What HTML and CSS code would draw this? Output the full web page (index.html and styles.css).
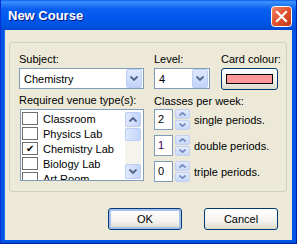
FILE: index.html
```html
<!DOCTYPE html>
<html lang="en">
<head>
  <meta charset="UTF-8">
  <title>New Course</title>
  <link rel="stylesheet" href="styles.css">
</head>
<body>
  <div class="window">
    <div class="titlebar">
      <span class="title">New Course</span>
      <span class="close">
        <svg width="21" height="21" viewBox="0 0 21 21">
          <defs>
            <linearGradient id="cg" x1="0" y1="0" x2="1" y2="1">
              <stop offset="0" stop-color="#f08a6a"/>
              <stop offset="0.5" stop-color="#e0522c"/>
              <stop offset="1" stop-color="#c23a18"/>
            </linearGradient>
          </defs>
          <rect x="0.5" y="0.5" width="20" height="20" rx="3" fill="url(#cg)" stroke="#fff"/>
          <path d="M6 6 L15 15 M15 6 L6 15" stroke="#fff" stroke-width="2.2" stroke-linecap="square"/>
        </svg>
      </span>
    </div>

    <div class="client">
      <div class="group">
        <div class="col-left">
          <div class="label">Subject:</div>
          <div class="combo">
            <span class="combo-text">Chemistry</span>
            <span class="drop"><svg width="8" height="5" viewBox="0 0 8 5"><path d="M0.5 0.5 L4 4 L7.5 0.5" fill="none" stroke="#4d6185" stroke-width="1.8"/></svg></span>
          </div>
          <div class="label gap-top">Required venue type(s):</div>
          <div class="listbox">
            <ul class="items">
              <li><span class="check"></span>Classroom</li>
              <li><span class="check"></span>Physics Lab</li>
              <li><span class="check on">&#10004;</span>Chemistry Lab</li>
              <li><span class="check"></span>Biology Lab</li>
              <li><span class="check"></span>Art Room</li>
            </ul>
            <div class="vscroll">
              <span class="sbtn"><svg width="8" height="5" viewBox="0 0 8 5"><path d="M0.5 4.5 L4 1 L7.5 4.5" fill="none" stroke="#4d6185" stroke-width="1.8"/></svg></span>
              <span class="thumb"></span>
              <span class="track"></span>
              <span class="sbtn"><svg width="8" height="5" viewBox="0 0 8 5"><path d="M0.5 0.5 L4 4 L7.5 0.5" fill="none" stroke="#4d6185" stroke-width="1.8"/></svg></span>
            </div>
          </div>
        </div>

        <div class="col-right">
          <div class="top-row">
            <div class="level">
              <div class="label">Level:</div>
              <div class="combo">
                <span class="combo-text">4</span>
                <span class="drop"><svg width="8" height="5" viewBox="0 0 8 5"><path d="M0.5 0.5 L4 4 L7.5 0.5" fill="none" stroke="#4d6185" stroke-width="1.8"/></svg></span>
              </div>
            </div>
            <div class="card">
              <div class="label">Card colour:</div>
              <div class="btn colour-btn"><span class="swatch"></span></div>
            </div>
          </div>
          <div class="label gap-top">Classes per week:</div>
          <div class="spins">
            <div class="spin-row">
              <span class="edit">2</span>
              <span class="spin"><span class="half"><svg width="7" height="4" viewBox="0 0 7 4"><path d="M0.5 3.5 L3.5 0.8 L6.5 3.5" fill="none" stroke="#7188c0" stroke-width="1.6"/></svg></span><span class="half"><svg width="7" height="4" viewBox="0 0 7 4"><path d="M0.5 0.5 L3.5 3.2 L6.5 0.5" fill="none" stroke="#7188c0" stroke-width="1.6"/></svg></span></span>
              <span class="spin-label">single periods.</span>
            </div>
            <div class="spin-row">
              <span class="edit purple">1</span>
              <span class="spin"><span class="half"><svg width="7" height="4" viewBox="0 0 7 4"><path d="M0.5 3.5 L3.5 0.8 L6.5 3.5" fill="none" stroke="#7188c0" stroke-width="1.6"/></svg></span><span class="half"><svg width="7" height="4" viewBox="0 0 7 4"><path d="M0.5 0.5 L3.5 3.2 L6.5 0.5" fill="none" stroke="#7188c0" stroke-width="1.6"/></svg></span></span>
              <span class="spin-label">double periods.</span>
            </div>
            <div class="spin-row">
              <span class="edit">0</span>
              <span class="spin"><span class="half"><svg width="7" height="4" viewBox="0 0 7 4"><path d="M0.5 3.5 L3.5 0.8 L6.5 3.5" fill="none" stroke="#7188c0" stroke-width="1.6"/></svg></span><span class="half"><svg width="7" height="4" viewBox="0 0 7 4"><path d="M0.5 0.5 L3.5 3.2 L6.5 0.5" fill="none" stroke="#7188c0" stroke-width="1.6"/></svg></span></span>
              <span class="spin-label">triple periods.</span>
            </div>
          </div>
        </div>
      </div>

      <div class="buttons">
        <div class="btn default">OK</div>
        <div class="btn">Cancel</div>
      </div>
    </div>
  </div>
</body>
</html>
```

FILE: styles.css
```css
* {
  box-sizing: border-box;
}
body {
  margin: 0;
  font-family: "Liberation Sans", Arial, sans-serif;
  font-size: 11px;
  color: #000;
  background: #fff;
}
.window {
  width: 297px;
  height: 244px;
  background: #0054e3;
  border-left: 1px solid #0831d9;
  border-right: 1px solid #001ea0;
  border-bottom: 1px solid #001ea0;
  display: flex;
  flex-direction: column;
}
.titlebar {
  height: 30px;
  display: flex;
  align-items: center;
  justify-content: space-between;
  padding: 0 4px 0 7px;
  background: linear-gradient(#0a5fe8 0, #3d95ff 2px, #2b80f7 4px, #0a5ef0 9px, #0058ee 18px, #0052e0 26px, #0048d0 30px);
}
.title {
  color: #fff;
  font-weight: bold;
  font-size: 13px;
  text-shadow: 1px 1px 0 #0a1883;
  padding-top: 1px;
}
.close {
  width: 21px;
  height: 21px;
  margin-top: 2px;
}
.close svg {
  display: block;
}
.client {
  flex: 1;
  margin: 0 4px 3px 3px;
  background: #ece9d8;
  border-left: 1px solid #166aee;
  padding-top: 12px;
}
.group {
  margin-left: 4px;
  width: 278px;
  height: 150px;
  border: 1px solid #d0d0bf;
  border-radius: 3px;
  padding: 10px 0 0 9px;
  display: flex;
  gap: 10px;
}
.col-left {
  width: 125px;
}
.label {
  height: 13px;
  line-height: 13px;
  white-space: nowrap;
}
.gap-top {
  margin-top: 5px;
}
.combo {
  margin-top: 2px;
  height: 21px;
  background: #fff;
  border: 1px solid #7f9db9;
  display: flex;
  align-items: center;
  justify-content: space-between;
  padding: 1px;
}
.combo-text {
  padding-left: 3px;
}
.drop {
  width: 16px;
  height: 19px;
  border: 1px solid #bccdf5;
  border-radius: 2px;
  background: linear-gradient(#dfe8fd, #c3d4fb);
  display: flex;
  align-items: center;
  justify-content: center;
}
.listbox {
  margin-top: 2px;
  margin-left: 1px;
  width: 124px;
  height: 72px;
  border: 1px solid #7f9db9;
  background: #fff;
  padding: 1px;
  display: flex;
  overflow: hidden;
}
.items {
  list-style: none;
  margin: 0;
  padding: 0;
  flex: 1;
}
.items li {
  height: 15px;
  display: flex;
  align-items: center;
  gap: 5px;
  white-space: nowrap;
}
.check {
  width: 16px;
  height: 13px;
  border: 1px solid #6f6f6f;
  background: #fff;
  font-size: 10px;
  line-height: 11px;
  text-align: center;
}
.vscroll {
  width: 16px;
  margin: 1px 1px 0 0;
  display: flex;
  flex-direction: column;
  background: #f4f3ee;
}
.sbtn, .thumb {
  height: 15px;
  border: 1px solid #bccdf5;
  border-radius: 2px;
  background: linear-gradient(90deg, #dfe8fd, #c3d4fb);
  display: flex;
  align-items: center;
  justify-content: center;
}
.thumb {
  height: 13px;
  margin-top: 1px;
}
.track {
  flex: 1;
}
.col-right {
  width: 124px;
}
.top-row {
  display: flex;
  gap: 11px;
}
.level {
  width: 56px;
}
.card {
  width: 57px;
}
.btn {
  height: 22px;
  border: 1px solid #003c74;
  border-radius: 3px;
  background: linear-gradient(#fff, #f4f3ee 60%, #dcd9cb);
  display: flex;
  align-items: center;
  justify-content: center;
}
.colour-btn {
  margin-top: 2px;
}
.swatch {
  width: 47px;
  height: 10px;
  background: #ff9999;
  border: 1px solid #000;
}
.spins {
  margin-top: 1px;
  display: flex;
  flex-direction: column;
  gap: 5px;
}
.spin-row {
  display: flex;
  align-items: center;
  height: 21px;
}
.edit {
  width: 19px;
  height: 21px;
  border: 1px solid #7f9db9;
  background: #fff;
  padding-left: 3px;
  line-height: 19px;
}
.purple {
  color: #3c0060;
}
.spin {
  margin-left: 2px;
  width: 15px;
  height: 21px;
  display: flex;
  flex-direction: column;
  gap: 1px;
}
.half {
  flex: 1;
  border: 1px solid #c3d2f3;
  border-radius: 2px;
  background: linear-gradient(#e2eafc, #c9d7f7);
  display: flex;
  align-items: center;
  justify-content: center;
}
.spin-label {
  margin-left: 4px;
  white-space: nowrap;
}
.buttons {
  display: flex;
  justify-content: flex-end;
  gap: 22px;
  margin-top: 16px;
  padding-right: 14px;
}
.buttons .btn {
  width: 74px;
}
.btn.default {
  box-shadow: inset 0 0 0 2px #a9c0ee;
}
```
